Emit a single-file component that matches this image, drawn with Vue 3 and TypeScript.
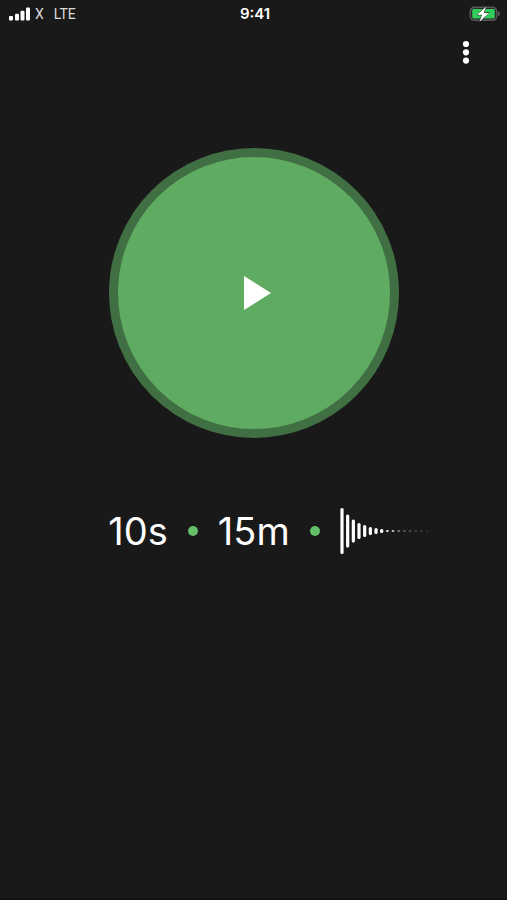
<script setup lang="ts">
interface Bar {
  x: number
  height: number
  width: number
  opacity: number
}

const heights = [46, 33, 23, 16, 12, 8, 6, 4, 2, 2, 1, 1, 1, 1, 1, 1]
const opacities = [1, 1, 1, 1, 1, 1, 1, 1, 0.85, 0.7, 0.7, 0.5, 0.4, 0.3, 0.25, 0.15]

const bars: Bar[] = heights.map((height, i) => ({
  x: 2 + i * 5.67,
  height,
  width: i < 8 ? 3.2 : 2.8,
  opacity: opacities[i],
}))
</script>

<template>
  <div class="screen">
    <div class="status">
      <div class="carrier">
        <svg class="signal" viewBox="0 0 22 14" aria-hidden="true">
          <rect x="0" y="9" width="4" height="4.5" rx="1" />
          <rect x="6" y="6.8" width="4" height="6.7" rx="1" />
          <rect x="11.5" y="3.8" width="4" height="9.7" rx="1" />
          <rect x="17" y="0.5" width="4" height="13" rx="1" />
        </svg>
        <span>X</span>
        <span class="network">LTE</span>
      </div>
      <time class="clock">9:41</time>
      <svg class="battery" viewBox="0 0 32 18" role="img" aria-label="Battery charging">
        <rect x="1.4" y="2.4" width="26.2" height="12.8" rx="4" fill="none" stroke="#555856" stroke-width="1.7" />
        <path d="M29 6.3c1.4.5 1.8 1.5 1.8 2.5s-.4 2-1.8 2.5z" fill="#606261" />
        <rect x="3.2" y="4.1" width="22.6" height="9.4" rx="1.5" fill="#32ce5c" />
        <path d="M17.2 1.4 8 9.8h5l-2.6 6.9 9.8-8.8h-5.4z" fill="#fff" stroke="#1a1a1a" stroke-width="1" stroke-linejoin="round" paint-order="stroke" />
      </svg>
    </div>

    <header class="toolbar">
      <button class="menu" type="button" aria-label="More options">
        <svg viewBox="0 0 8 24" aria-hidden="true">
          <circle cx="4" cy="4" r="3.1" />
          <circle cx="4" cy="12.3" r="3.1" />
          <circle cx="4" cy="20.6" r="3.1" />
        </svg>
      </button>
    </header>

    <main class="timer">
      <button class="play" type="button" aria-label="Start">
        <svg viewBox="0 0 28 36" aria-hidden="true">
          <path d="M0 1v34L27 18z" />
        </svg>
      </button>
      <div class="settings">
        <button class="value" type="button">10s</button>
        <span class="dot"></span>
        <button class="value" type="button">15m</button>
        <span class="dot"></span>
        <button class="value" type="button" aria-label="Sound decay">
          <svg class="wave" viewBox="0 0 92 48" aria-hidden="true">
            <rect
              v-for="bar in bars"
              :key="bar.x"
              :x="bar.x - bar.width / 2"
              :y="24 - bar.height / 2"
              :width="bar.width"
              :height="bar.height"
              :opacity="bar.opacity"
              :rx="Math.min(1.5, bar.height / 2)"
            />
          </svg>
        </button>
      </div>
    </main>
  </div>
</template>

<style>
body {
  background: #191919;
}
</style>

<style scoped>
.screen {
  display: flex;
  flex-direction: column;
  box-sizing: border-box;
  min-height: 100vh;
  background: #191919;
  border-bottom: 2px solid #180f15;
  color: #fff;
  font-family: Inter, "Liberation Sans", sans-serif;
}

button {
  padding: 0;
  border: 0;
  background: none;
  color: inherit;
  font: inherit;
  cursor: pointer;
}

svg {
  display: block;
  fill: #fff;
}

.status {
  display: grid;
  grid-template-columns: 1fr auto 1fr;
  align-items: center;
  height: 28px;
  padding: 0 6px 0 9px;
  line-height: 16px;
}

.carrier {
  display: flex;
  align-items: center;
  gap: 4px;
  color: #dcdcdc;
  font-family: Roboto, "Liberation Sans", sans-serif;
  font-size: 14px;
}

.signal {
  width: 22px;
  height: 14px;
}

.network {
  margin-left: 6px;
}

.clock {
  font-size: 15px;
  font-weight: 600;
}

.battery {
  width: 32px;
  height: 18px;
  justify-self: end;
}

.toolbar {
  display: flex;
  justify-content: flex-end;
  padding: 4px 21px;
}

.menu {
  display: flex;
  align-items: center;
  justify-content: center;
  width: 40px;
  height: 40px;
}

.menu svg {
  width: 8px;
  height: 24px;
}

.timer {
  display: flex;
  flex-direction: column;
  align-items: center;
  padding-top: 72px;
}

.play {
  display: flex;
  align-items: center;
  justify-content: center;
  box-sizing: border-box;
  width: 290px;
  height: 290px;
  padding-left: 8px;
  border: 9px solid #406f43;
  border-radius: 50%;
  background: #5fab61;
}

.play svg {
  width: 28px;
  height: 36px;
}

.settings {
  display: flex;
  align-items: center;
  gap: 20px;
  margin-top: 69px;
  padding-left: 33px;
}

.value {
  font-size: 38px;
  font-weight: 400;
  line-height: 48px;
}

.dot {
  width: 10px;
  height: 10px;
  border-radius: 50%;
  background: #65bf68;
}

.wave {
  width: 92px;
  height: 48px;
}
</style>
